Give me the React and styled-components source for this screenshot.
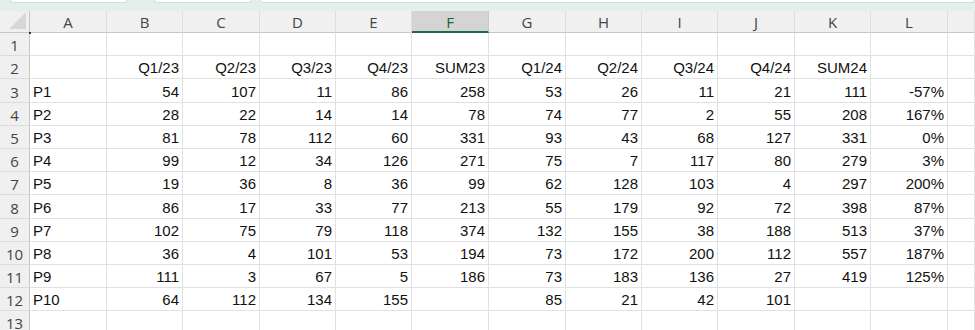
import React from "react";
import styled, { createGlobalStyle } from "styled-components";

const Global = createGlobalStyle`
  html, body { margin: 0; padding: 0; background: #ffffff; overflow: hidden; }
  body { font-family: "Liberation Sans", Arial, sans-serif; }
`;

const COLS = [77, 76, 77, 76, 76, 77, 77, 76, 76, 77, 76, 77];
const LETTERS = ["A", "B", "C", "D", "E", "F", "G", "H", "I", "J", "K", "L"];
const SELECTED_COL = "F";

const DATA = [
  [],
  ["", "Q1/23", "Q2/23", "Q3/23", "Q4/23", "SUM23", "Q1/24", "Q2/24", "Q3/24", "Q4/24", "SUM24", ""],
  ["P1", 54, 107, 11, 86, 258, 53, 26, 11, 21, 111, "-57%"],
  ["P2", 28, 22, 14, 14, 78, 74, 77, 2, 55, 208, "167%"],
  ["P3", 81, 78, 112, 60, 331, 93, 43, 68, 127, 331, "0%"],
  ["P4", 99, 12, 34, 126, 271, 75, 7, 117, 80, 279, "3%"],
  ["P5", 19, 36, 8, 36, 99, 62, 128, 103, 4, 297, "200%"],
  ["P6", 86, 17, 33, 77, 213, 55, 179, 92, 72, 398, "87%"],
  ["P7", 102, 75, 79, 118, 374, 132, 155, 38, 188, 513, "37%"],
  ["P8", 36, 4, 101, 53, 194, 73, 172, 200, 112, 557, "187%"],
  ["P9", 111, 3, 67, 5, 186, 73, 183, 136, 27, 419, "125%"],
  ["P10", 64, 112, 134, 155, "", 85, 21, 42, 101, "", ""],
  [],
];

const Page = styled.div`
  width: 975px;
  height: 330px;
  overflow: hidden;
  display: flex;
  flex-direction: column;
  background: #ffffff;
`;

const TabStrip = styled.div`
  height: 11px;
  flex: none;
  background: #e4eeec;
  display: flex;
  align-items: flex-start;
`;

const Tab = styled.div`
  height: 2px;
  width: ${(p) => p.$w}px;
  margin-left: ${(p) => p.$ml}px;
  background: #ffffff;
  border: 1px solid #d3dedb;
  border-top: none;
  border-radius: 0 0 5px 5px;
  flex: ${(p) => (p.$grow ? "1" : "none")};
`;

const Sheet = styled.div`
  display: grid;
  grid-template-columns: 30px ${COLS.map((w) => `${w}px`).join(" ")} 1fr;
  grid-template-rows: 22px;
  grid-auto-rows: 23.2px;
  flex: none;
`;

const Corner = styled.div`
  background: #f0f0f0;
  border-bottom: 1px solid #c6c6c6;
  border-right: 1px solid #c6c6c6;
  position: relative;
  overflow: hidden;
`;

const CornerTri = styled.div`
  position: absolute;
  right: 3px;
  bottom: 3px;
  width: 0;
  height: 0;
  border-left: 17px solid transparent;
  border-bottom: 17px solid #d7d7d7;
`;

const ColHead = styled.div`
  background: ${(p) => (p.$sel ? "#d4d4d4" : "#f0f0f0")};
  border-bottom: ${(p) => (p.$sel ? "2px solid #1d6b3f" : "1px solid #c6c6c6")};
  border-right: 1px solid ${(p) => (p.$sel ? "#c9c9c9" : "#dedede")};
  color: ${(p) => (p.$sel ? "#2a5a3c" : "#444444")};
  font-family: "Open Sans", "Noto Sans", sans-serif;
  font-size: 15px;
  display: flex;
  align-items: center;
  justify-content: center;
  padding-top: 1px;
  box-sizing: border-box;
`;

const RowHead = styled.div`
  background: #f0f0f0;
  border-right: 1px solid #c6c6c6;
  border-bottom: 1px solid #dcdcdc;
  color: #444444;
  font-family: "Open Sans", "Noto Sans", sans-serif;
  font-size: 15px;
  display: flex;
  align-items: flex-end;
  justify-content: center;
  padding-bottom: 0;
  line-height: 20px;
  box-sizing: border-box;
`;

const Cell = styled.div`
  border-right: 1px solid #e1e1e1;
  border-bottom: 1px solid #e1e1e1;
  color: #111111;
  font-size: 15px;
  display: flex;
  align-items: flex-end;
  justify-content: ${(p) => (p.$num ? "flex-end" : "flex-start")};
  padding: 0 3px 2px 3px;
  box-sizing: border-box;
  white-space: nowrap;
  overflow: visible;
  line-height: 17px;
  position: relative;
`;

const Anchor = styled.span`
  position: absolute;
  left: -1px;
  top: -1px;
  width: 2px;
  height: 2px;
  background: #333333;
`;

function isRight(v) {
  if (typeof v === "number") return true;
  if (typeof v === "string" && /^(Q|SUM|-?\d)/.test(v)) return true;
  return false;
}

export default function App() {
  return (
    <Page>
      <Global />
      <TabStrip>
        <Tab $w={115} $ml={10} />
        <Tab $w={96} $ml={27} />
        <Tab $w={120} $ml={8} $grow />
      </TabStrip>
      <Sheet>
        <Corner>
          <CornerTri />
        </Corner>
        {LETTERS.map((l) => (
          <ColHead key={l} $sel={l === SELECTED_COL}>
            {l}
          </ColHead>
        ))}
        <ColHead />
        {DATA.map((row, r) => (
          <React.Fragment key={r}>
            <RowHead>{r + 1}</RowHead>
            {LETTERS.map((l, c) => {
              const v = row[c] === undefined ? "" : row[c];
              return (
                <Cell key={l} $num={isRight(v)}>
                  {r === 0 && c === 0 ? <Anchor /> : null}
                  {v}
                </Cell>
              );
            })}
            <Cell />
          </React.Fragment>
        ))}
      </Sheet>
    </Page>
  );
}
